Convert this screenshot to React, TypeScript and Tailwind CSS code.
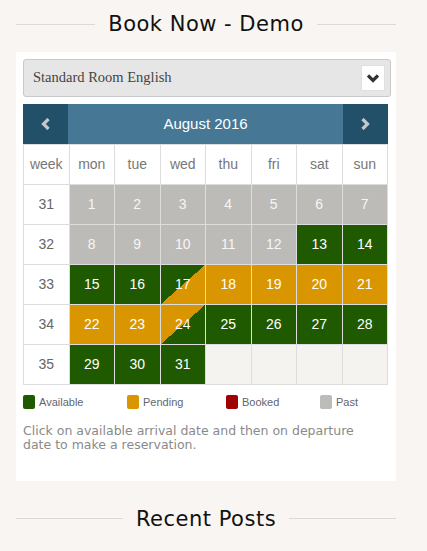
import React from "react";

type Status = "past" | "avail" | "pend" | "in" | "out" | "empty";

const statusClass: Record<Status, string> = {
  past: "bg-[#bdbbb7] text-[#f6f6f6]",
  avail: "bg-[#1f5a00] text-white",
  pend: "bg-[#d99600] text-white",
  // green arriving, pending from the afternoon
  in: "bg-[linear-gradient(to_bottom_right,#1f5a00_50%,#d99600_50%)] text-white",
  out: "bg-[linear-gradient(to_bottom_right,#d99600_50%,#1f5a00_50%)] text-white",
  empty: "bg-[#f5f3ef]",
};

const weeks: { week: number; days: [string, Status][] }[] = [
  { week: 31, days: [["1", "past"], ["2", "past"], ["3", "past"], ["4", "past"], ["5", "past"], ["6", "past"], ["7", "past"]] },
  { week: 32, days: [["8", "past"], ["9", "past"], ["10", "past"], ["11", "past"], ["12", "past"], ["13", "avail"], ["14", "avail"]] },
  { week: 33, days: [["15", "avail"], ["16", "avail"], ["17", "in"], ["18", "pend"], ["19", "pend"], ["20", "pend"], ["21", "pend"]] },
  { week: 34, days: [["22", "pend"], ["23", "pend"], ["24", "out"], ["25", "avail"], ["26", "avail"], ["27", "avail"], ["28", "avail"]] },
  { week: 35, days: [["29", "avail"], ["30", "avail"], ["31", "avail"], ["", "empty"], ["", "empty"], ["", "empty"], ["", "empty"]] },
];

const dayNames = ["week", "mon", "tue", "wed", "thu", "fri", "sat", "sun"];

const legend = [
  { label: "Available", color: "bg-[#1f5a00]", width: "w-[104px]" },
  { label: "Pending", color: "bg-[#d99600]", width: "w-[99px]" },
  { label: "Booked", color: "bg-[#a00000]", width: "w-[94px]" },
  { label: "Past", color: "bg-[#bdbbb7]", width: "w-[60px]" },
];

function WidgetTitle({ children }: { children: React.ReactNode }) {
  return (
    <div className="flex items-center gap-[13px]">
      <div className="h-px flex-1 bg-[#dcdad7]" />
      <h2 className="font-['DejaVu_Sans',sans-serif] text-[21px] leading-[26px] tracking-[0.5px] text-[#111]">
        {children}
      </h2>
      <div className="h-px flex-1 bg-[#dcdad7]" />
    </div>
  );
}

function Chevron({ dir, className }: { dir: "left" | "right" | "down"; className?: string }) {
  const points =
    dir === "left" ? "7.5,1 2.5,6 7.5,11" : dir === "right" ? "1.5,1 6.5,6 1.5,11" : "1,1.5 6,6.5 11,1.5";
  const size = dir === "down" ? { w: 12, h: 9 } : { w: 9, h: 12 };
  return (
    <svg width={size.w} height={size.h} viewBox={`0 0 ${size.w} ${size.h}`} className={className} aria-hidden="true">
      <polyline points={points} fill="none" stroke="currentColor" strokeWidth="3.2" strokeLinejoin="miter" />
    </svg>
  );
}

export default function App() {
  return (
    <div className="min-h-[551px] bg-[#f8f5f2] pt-[11px]">
      <div className="ml-4 w-[380px]">
        <WidgetTitle>Book Now - Demo</WidgetTitle>

        <div className="mt-[15px] bg-white px-[7px] pt-[7px] pb-[28px]">
          {/* room select */}
          <div className="flex h-[38px] w-[368px] items-center justify-between rounded-[3px] border border-[#c9c9c9] bg-[#e6e6e6] pl-[9px] pr-[5px]">
            <span className="font-['Liberation_Serif',serif] text-[14.5px] text-[#444]">Standard Room English</span>
            <span className="flex h-[26px] w-[24px] items-center justify-center border border-[#e0e0e0] bg-white text-[#333]">
              <Chevron dir="down" />
            </span>
          </div>

          {/* calendar */}
          <div className="mt-[7px] w-[365px] font-['Liberation_Sans',Arial,sans-serif]">
            <div className="flex h-[40px] bg-[#467896] text-white">
              <button className="flex w-[45px] items-center justify-center bg-[#215068] text-[#c4c8cc]">
                <Chevron dir="left" />
              </button>
              <div className="flex flex-1 items-center justify-center text-[15px]">August 2016</div>
              <button className="flex w-[45px] items-center justify-center bg-[#215068] text-[#c4c8cc]">
                <Chevron dir="right" />
              </button>
            </div>

            <div className="grid grid-cols-8 gap-px border-x border-b border-[#dddddd] bg-[#dddddd] pt-px text-[14px]">
              {dayNames.map((d) => (
                <div key={d} className="flex h-[39px] items-center justify-center bg-white text-[#777]">
                  {d}
                </div>
              ))}
              {weeks.map((w) => (
                <React.Fragment key={w.week}>
                  <div className="flex h-[39px] items-center justify-center bg-white text-[#666]">{w.week}</div>
                  {w.days.map(([n, s], i) => (
                    <div key={i} className={`flex h-[39px] items-center justify-center ${statusClass[s]}`}>
                      {n}
                    </div>
                  ))}
                </React.Fragment>
              ))}
            </div>
          </div>

          {/* legend */}
          <div className="mt-[9px] flex font-['Liberation_Sans',Arial,sans-serif] text-[11px] text-[#5f6670]">
            {legend.map((l) => (
              <div key={l.label} className={`flex items-center gap-[4px] ${l.width}`}>
                <span className={`h-[14px] w-[12px] rounded-[2px] ${l.color}`} />
                <span>{l.label}</span>
              </div>
            ))}
          </div>

          <p className="mt-[13px] font-['DejaVu_Sans',sans-serif] text-[12.5px] leading-[14.5px] text-[#8a8a8a]">
            Click on available arrival date and then on departure
            <br />
            date to make a reservation.
          </p>
        </div>

        <div className="mt-[25px]">
          <WidgetTitle>Recent Posts</WidgetTitle>
        </div>
      </div>
    </div>
  );
}
